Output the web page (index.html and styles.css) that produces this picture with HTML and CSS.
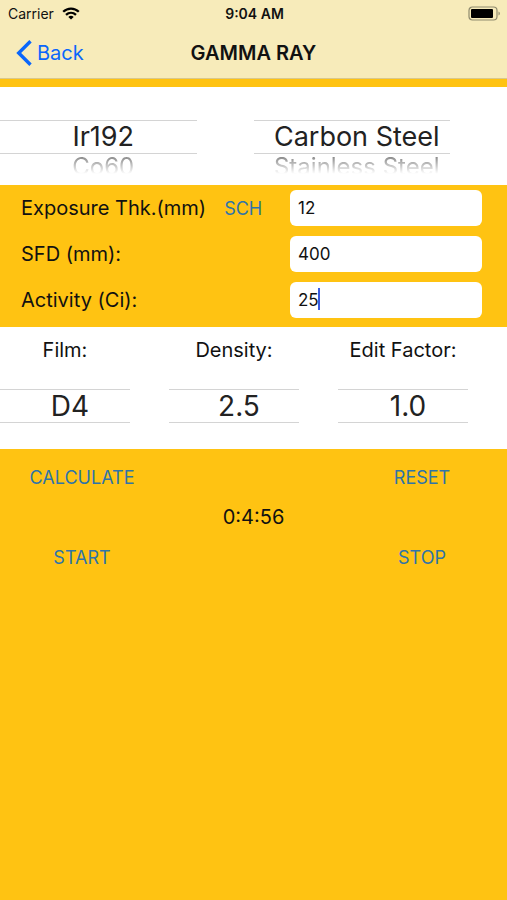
FILE: index.html
```html
<!DOCTYPE html>
<html lang="en">
<head>
<meta charset="UTF-8">
<meta name="viewport" content="width=device-width, initial-scale=1.0">
<title>Gamma Ray</title>
<link rel="stylesheet" href="styles.css">
</head>
<body>
<header class="header">
  <div class="status">
    <span class="carrier">Carrier
      <svg class="wifi" width="18" height="13" viewBox="0 0 18 13" fill="none" stroke="#000" stroke-width="2.3">
        <path d="M1.2 4.8C5.6.5 12.4.5 16.8 4.8"/>
        <path d="M4 7.8c2.9-2.7 7.1-2.7 10 0"/>
        <path d="M9 12.6 6.3 9.9c1.5-1.4 3.9-1.4 5.4 0z" fill="#000" stroke="none"/>
      </svg>
    </span>
    <span class="time">9:04 AM</span>
    <svg class="battery" width="33" height="15" viewBox="0 0 33 15">
      <rect x="1" y="1" width="28" height="13" rx="3.5" fill="none" stroke="#8f8b6e" stroke-width="1.2"/>
      <rect x="3" y="3" width="22" height="9" rx="1" fill="#000"/>
      <path d="M30.5 5.5c1.8.6 1.8 3.4 0 4z" fill="#8f8b6e"/>
    </svg>
  </div>
  <nav class="navbar">
    <a class="back" href="#">
      <svg width="16" height="26" viewBox="0 0 16 26" fill="none" stroke="#0a66fb" stroke-width="3.4">
        <path d="M14.5 1.2 2.7 13l11.8 11.8"/>
      </svg>
      Back
    </a>
    <h1>GAMMA RAY</h1>
  </nav>
</header>

<main>
  <section class="pickers sources">
    <div class="picker">
      <select id="source" aria-label="Source">
        <option>Ir192</option>
        <option>Co60</option>
      </select>
      <span class="next">Co60</span>
    </div>
    <div class="picker">
      <select id="material" aria-label="Material">
        <option>Carbon Steel</option>
        <option>Stainless Steel</option>
      </select>
      <span class="next">Stainless Steel</span>
    </div>
  </section>

  <form class="fields">
    <div class="row">
      <label for="thickness">Exposure Thk.(mm)</label>
      <button type="button" class="link">SCH</button>
      <div class="field"><input type="text" id="thickness" value="12"></div>
    </div>
    <div class="row">
      <label for="sfd">SFD (mm):</label>
      <div class="field"><input type="text" id="sfd" value="400"></div>
    </div>
    <div class="row">
      <label for="activity">Activity (Ci):</label>
      <div class="field"><input type="text" id="activity" value="25"><span class="caret"></span></div>
    </div>
  </form>

  <section class="pickers factors">
    <div class="picker">
      <label for="film">Film:</label>
      <select id="film">
        <option>D4</option>
      </select>
    </div>
    <div class="picker">
      <label for="density">Density:</label>
      <select id="density">
        <option>2.5</option>
      </select>
    </div>
    <div class="picker">
      <label for="factor">Edit Factor:</label>
      <select id="factor">
        <option>1.0</option>
      </select>
    </div>
  </section>

  <section class="actions">
    <div class="buttons">
      <button type="button" class="link">CALCULATE</button>
      <button type="button" class="link">RESET</button>
    </div>
    <p class="timer">0:4:56</p>
    <div class="buttons">
      <button type="button" class="link">START</button>
      <button type="button" class="link">STOP</button>
    </div>
  </section>
</main>
</body>
</html>
```

FILE: styles.css
```css
* {
  box-sizing: border-box;
}
body {
  margin: 0;
  min-height: 100vh;
  background-color: #ffc312;
  color: #111;
  font-family: Inter, "Liberation Sans", sans-serif;
  font-size: 20px;
}
.header {
  background-color: #f7ebba;
  border-bottom: 1px solid #d9c88c;
  margin-bottom: 8px;
}
.status {
  display: grid;
  grid-template-columns: 1fr auto 1fr;
  align-items: center;
  height: 27px;
  padding: 0 6px 0 8px;
  font-size: 14px;
}
.carrier {
  display: flex;
  align-items: center;
  gap: 8px;
}
.time {
  font-weight: 600;
}
.battery {
  justify-self: end;
}
.navbar {
  display: grid;
  grid-template-columns: 1fr auto 1fr;
  align-items: center;
  height: 51px;
  padding: 0 16px;
}
.back {
  display: flex;
  align-items: center;
  gap: 5px;
  color: #0a66fb;
  text-decoration: none;
}
h1 {
  margin: 0;
  font-size: 20px;
  font-weight: 600;
}

.pickers {
  display: grid;
  background-color: #fff;
}
.picker {
  display: flex;
  flex-direction: column;
}
.picker select {
  appearance: none;
  width: 100%;
  height: 34px;
  padding: 0 0 0 10px;
  border: 0;
  border-top: 1px solid #d4d4d4;
  border-bottom: 1px solid #d4d4d4;
  border-radius: 0;
  background: none;
  color: #222;
  font-family: inherit;
  font-size: 28px;
  line-height: 32px;
  text-align: center;
  text-align-last: center;
}
.sources {
  grid-template-columns: 1fr 1fr;
  height: 98px;
  padding-top: 33px;
}
.sources .picker {
  margin-right: 57px;
}
.sources select {
  font-size: 27px;
}
/* the row under the selected one rolls out of sight */
.next {
  padding-left: 10px;
  color: #777;
  font-size: 24px;
  line-height: 26px;
  text-align: center;
  white-space: nowrap;
  -webkit-mask-image: linear-gradient(#000, transparent 76%);
  mask-image: linear-gradient(#000, transparent 76%);
}
.factors {
  grid-template-columns: 1fr 1fr 1fr;
  height: 122px;
  padding-top: 10px;
}
.factors .picker {
  gap: 26px;
  margin-right: 39px;
}
.factors label {
  line-height: 26px;
  text-align: center;
  white-space: nowrap;
}

.fields {
  display: flex;
  flex-direction: column;
  gap: 10px;
  padding: 5px 25px 9px 21px;
}
.row {
  display: flex;
  align-items: center;
}
.link {
  padding: 0;
  border: 0;
  background: none;
  color: #2f74a8;
  font-family: inherit;
  font-size: 18px;
  cursor: pointer;
}
.row .link {
  margin-left: 18px;
}
.field {
  position: relative;
  width: 192px;
  margin-left: auto;
}
.field input {
  display: block;
  width: 100%;
  height: 36px;
  padding: 0 8px;
  border: 0;
  border-radius: 6px;
  background-color: #fff;
  color: #111;
  font-family: inherit;
  font-size: 17px;
}
.caret {
  position: absolute;
  top: 6px;
  left: 28px;
  width: 2px;
  height: 22px;
  background-color: #3a5be0;
}

.actions {
  padding-top: 13px;
}
.buttons {
  display: flex;
  justify-content: space-between;
  padding: 0 30px 0 27px;
}
.buttons .link {
  width: 110px;
  height: 30px;
}
.timer {
  margin: 10px 0;
  line-height: 30px;
  text-align: center;
}
```
